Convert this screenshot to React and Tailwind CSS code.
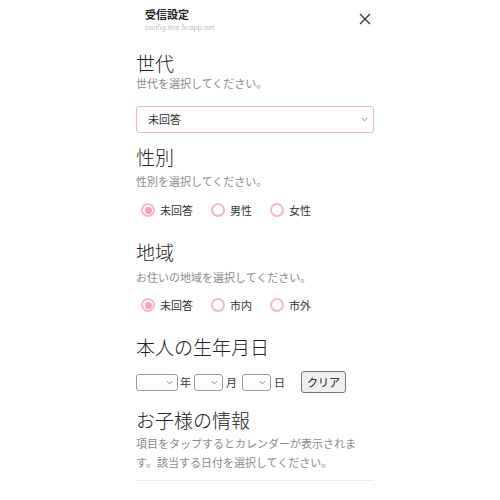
import React from "react";

const font = { fontFamily: '"Noto Sans CJK JP", "Noto Sans", sans-serif' };

function Chevron({ className = "" }) {
  return (
    <svg className={className} width="7" height="5" viewBox="0 0 7 5" fill="none">
      <path d="M0.8 1 L3.5 3.8 L6.2 1" stroke="#8a8a8a" strokeWidth="1" />
    </svg>
  );
}

function Radio({ checked, label }) {
  return (
    <div className="flex items-center gap-[5px]">
      <span className="w-[14px] h-[14px] rounded-full border-2 border-[#f7b6cd] flex items-center justify-center bg-white">
        {checked && <span className="w-[7px] h-[7px] rounded-full bg-[#f4a3bf]" />}
      </span>
      <span className="text-[11px] leading-[16px] text-[#333]">{label}</span>
    </div>
  );
}

function RadioRow({ items }) {
  return (
    <div className="flex items-center gap-[18px] pl-[5px] h-[16px]">
      {items.map((t, i) => (
        <Radio key={t} checked={i === 0} label={t} />
      ))}
    </div>
  );
}

function SmallSelect({ w }) {
  return (
    <div
      className="h-[17px] border border-[#9a9a9a] rounded-[3px] bg-white flex items-center justify-end pr-[4px]"
      style={{ width: w }}
    >
      <Chevron />
    </div>
  );
}

export default function App() {
  return (
    <div className="w-[500px] h-[500px] bg-white overflow-hidden" style={font}>
      <div className="w-[248px] mx-auto pl-[10px]">
        {/* header */}
        <div className="flex justify-between items-start pt-[7px]">
          <div className="pl-[9px]">
            <div className="text-[11px] leading-[14px] font-bold text-[#222]">受信設定</div>
            <div
              className="mt-[2px] text-[7.5px] leading-[10px] text-[#c4c4c4]"
              style={{ fontFamily: 'Roboto, "Liberation Sans", sans-serif' }}
            >
              config.line.ficapp.net
            </div>
          </div>
          <svg className="mt-[6px] mr-[3px]" width="12" height="12" viewBox="0 0 12 12">
            <path d="M1 1 L11 11 M11 1 L1 11" stroke="#333" strokeWidth="1.3" />
          </svg>
        </div>

        {/* 世代 */}
        <h2 className="mt-[18px] text-[19px] leading-[24px] font-light text-[#222]">世代</h2>
        <p className="text-[11px] leading-[16px] text-[#8a8a8a]">世代を選択してください。</p>
        <div className="mt-[15px] h-[27px] border border-[#f4b2ca] rounded-[3px] flex items-center justify-between pl-[11px] pr-[5px]">
          <span className="text-[11px] text-[#333]">未回答</span>
          <Chevron />
        </div>

        {/* 性別 */}
        <h2 className="mt-[12px] text-[19px] leading-[24px] font-light text-[#222]">性別</h2>
        <p className="mt-[4px] text-[11px] leading-[16px] text-[#8a8a8a]">性別を選択してください。</p>
        <div className="mt-[13px]">
          <RadioRow items={["未回答", "男性", "女性"]} />
        </div>

        {/* 地域 */}
        <h2 className="mt-[22px] text-[19px] leading-[24px] font-light text-[#222]">地域</h2>
        <p className="mt-[5px] text-[11px] leading-[16px] text-[#8a8a8a]">お住いの地域を選択してください。</p>
        <div className="mt-[12px]">
          <RadioRow items={["未回答", "市内", "市外"]} />
        </div>

        {/* 生年月日 */}
        <h2 className="mt-[22px] text-[19px] leading-[24px] font-light text-[#222]">本人の生年月日</h2>
        <div className="mt-[12px] flex items-center h-[22px] text-[11px] text-[#333]">
          <SmallSelect w={42} />
          <span className="ml-[2px] mr-[3px]">年</span>
          <SmallSelect w={29} />
          <span className="ml-[3px] mr-[5px]">月</span>
          <SmallSelect w={29} />
          <span className="ml-[3px]">日</span>
          <button className="ml-[16px] h-[22px] px-[5px] border border-[#767676] rounded-[3px] bg-[#efefef] text-[11px] text-[#111] leading-none">
            クリア
          </button>
        </div>

        {/* お子様の情報 */}
        <h2 className="mt-[15px] text-[19px] leading-[24px] font-light text-[#222]">お子様の情報</h2>
        <p className="mt-[2px] text-[11px] leading-[19px] text-[#8a8a8a]">
          項目をタップするとカレンダーが表示されます。該当する日付を選択してください。
        </p>
        <div className="mt-[8px] h-px bg-[#ececec]" />
      </div>
    </div>
  );
}
